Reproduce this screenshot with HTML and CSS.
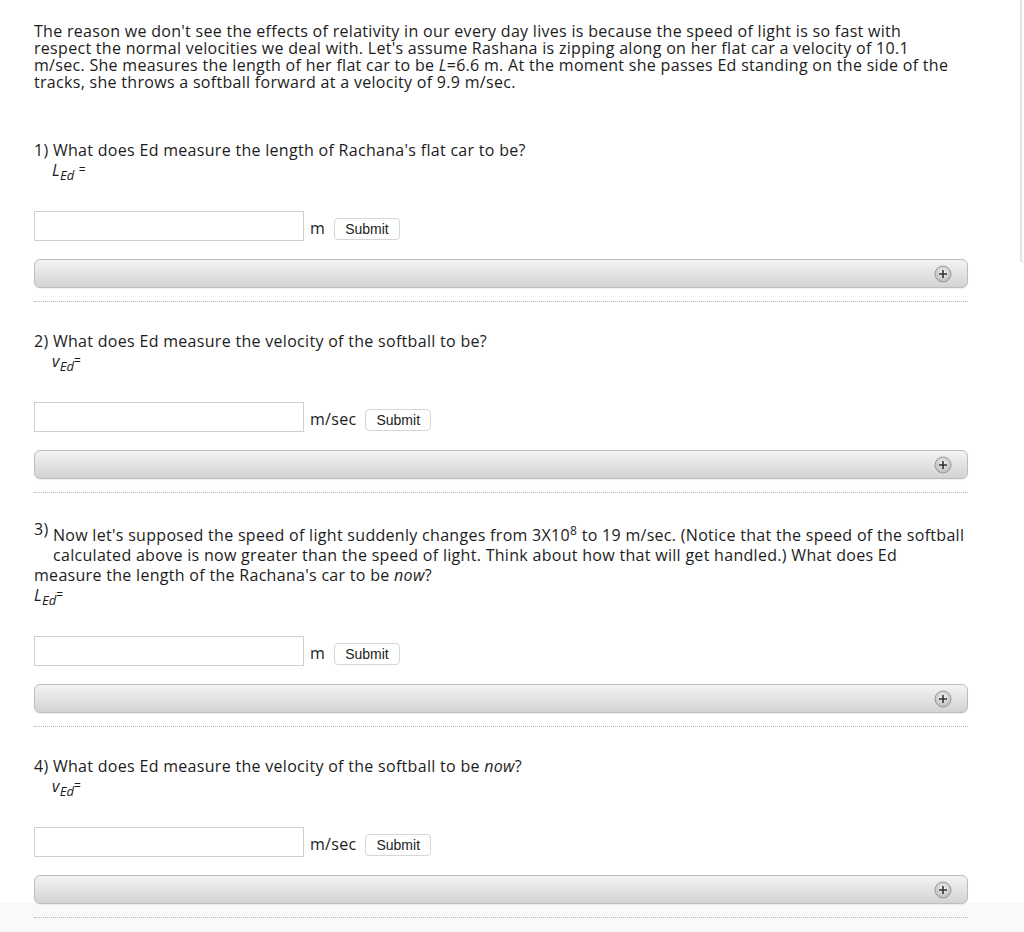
FILE: index.html
```html
<!DOCTYPE html>
<html lang="en">
<head>
<meta charset="utf-8">
<title>Relativity question</title>
<link rel="stylesheet" href="styles.css">
</head>
<body>
<div class="side-edge"></div>
<main class="page">
  <p class="intro">The reason we don't see the effects of relativity in our every day lives is because the speed of light is so fast with<br>respect the normal velocities we deal with. Let's assume Rashana is zipping along on her flat car a velocity of 10.1<br>m/sec. She measures the length of her flat car to be <i>L</i>=6.6 m. At the moment she passes Ed standing on the side of the<br>tracks, she throws a softball forward at a velocity of 9.9 m/sec.</p>

  <section class="q q-first">
    <div class="q-text">
      <div>1) What does Ed measure the length of Rachana's flat car to be?</div>
      <div class="var"><i>L<sub>Ed</sub></i> <span class="eq">=</span></div>
    </div>
    <div class="answer"><input type="text" class="field"><span class="unit">m</span><button class="submit">Submit</button></div>
    <div class="bar"><svg class="plus" viewBox="0 0 18 18" width="18" height="18"><defs><radialGradient id="g1" cx="50%" cy="40%" r="60%"><stop offset="0" stop-color="#f4f4f4"/><stop offset="1" stop-color="#b9b9b9"/></radialGradient></defs><circle cx="9" cy="9" r="8" fill="url(#g1)" stroke="#9a9a9a" stroke-width="1"/><path d="M9 5v8M5 9h8" stroke="#333" stroke-width="1.6"/></svg></div>
    <div class="dots"></div>
  </section>

  <section class="q">
    <div class="q-text">
      <div>2) What does Ed measure the velocity of the softball to be?</div>
      <div class="var"><i>v<sub>Ed</sub></i><span class="eq">=</span></div>
    </div>
    <div class="answer"><input type="text" class="field"><span class="unit">m/sec</span><button class="submit">Submit</button></div>
    <div class="bar"><svg class="plus" viewBox="0 0 18 18" width="18" height="18"><circle cx="9" cy="9" r="8" fill="url(#g1)" stroke="#9a9a9a" stroke-width="1"/><path d="M9 5v8M5 9h8" stroke="#333" stroke-width="1.6"/></svg></div>
    <div class="dots"></div>
  </section>

  <section class="q">
    <div class="q-text">
      <div><span class="num-raised">3)</span> Now let's supposed the speed of light suddenly changes from 3X10<sup>8</sup> to 19 m/sec. (Notice that the speed of the softball</div>
      <div class="indent">calculated above is now greater than the speed of light. Think about how that will get handled.) What does Ed</div>
      <div>measure the length of the Rachana's car to be <i>now</i>?</div>
      <div><i>L<sub>Ed</sub></i><span class="eq">=</span></div>
    </div>
    <div class="answer"><input type="text" class="field"><span class="unit">m</span><button class="submit">Submit</button></div>
    <div class="bar"><svg class="plus" viewBox="0 0 18 18" width="18" height="18"><circle cx="9" cy="9" r="8" fill="url(#g1)" stroke="#9a9a9a" stroke-width="1"/><path d="M9 5v8M5 9h8" stroke="#333" stroke-width="1.6"/></svg></div>
    <div class="dots"></div>
  </section>

  <section class="q">
    <div class="q-text">
      <div>4) What does Ed measure the velocity of the softball to be <i>now</i>?</div>
      <div class="var"><i>v<sub>Ed</sub></i><span class="eq">=</span></div>
    </div>
    <div class="answer"><input type="text" class="field"><span class="unit">m/sec</span><button class="submit">Submit</button></div>
    <div class="bar"><svg class="plus" viewBox="0 0 18 18" width="18" height="18"><circle cx="9" cy="9" r="8" fill="url(#g1)" stroke="#9a9a9a" stroke-width="1"/><path d="M9 5v8M5 9h8" stroke="#333" stroke-width="1.6"/></svg></div>
    <div class="dots"></div>
  </section>
</main>
</body>
</html>
```

FILE: styles.css
```css
html, body {
  margin: 0;
  padding: 0;
}

body {
  background: linear-gradient(#ffffff 903px, #f9f9f9 903px);
  min-height: 932px;
  font-family: "Open Sans", Lato, sans-serif;
  font-size: 16px;
  letter-spacing: 0.3px;
  color: #1c1c1c;
  position: relative;
}

.side-edge {
  position: absolute;
  top: 0;
  left: 1020px;
  width: 10px;
  height: 263px;
  border-left: 2px solid #e4e4e4;
  border-bottom: 1px solid #e4e4e4;
  border-bottom-left-radius: 4px;
  box-sizing: border-box;
}

.page {
  width: 934px;
  padding-left: 34px;
}

.intro {
  margin: 0;
  padding-top: 23px;
  line-height: 17px;
}

.q {
  display: flex;
  flex-direction: column;
}

.q-first {
  margin-top: 49px;
}

.q-text {
  line-height: 20px;
  margin-top: 29px;
}

.q-first .q-text {
  margin-top: 0;
}

.var {
  padding-left: 18px;
}

.indent {
  padding-left: 19px;
}

.num-raised {
  position: relative;
  top: -3px;
  vertical-align: 3px;
}

sub {
  font-size: 13px;
  vertical-align: -4px;
  line-height: 0;
  letter-spacing: 0;
}

sup {
  font-size: 12px;
  vertical-align: 6px;
  line-height: 0;
}

.eq {
  font-size: 12px;
  vertical-align: 2px;
}

.answer {
  display: flex;
  align-items: center;
  margin-top: 31px;
  height: 30px;
}

.field {
  width: 270px;
  height: 30px;
  box-sizing: border-box;
  border: 1px solid #cfcfcf;
  margin: 0;
  padding: 0 4px;
  background: #fff;
}

.unit {
  margin-left: 6px;
  margin-right: 9px;
  position: relative;
  top: 2px;
}

.submit {
  font-family: "Liberation Sans", Arial, sans-serif;
  font-size: 14px;
  letter-spacing: 0;
  color: #222;
  height: 22px;
  padding: 0 10px;
  background: #fff;
  border: 1px solid #d6d6d6;
  border-radius: 4px;
  position: relative;
  top: 3px;
}

.bar {
  margin-top: 18px;
  height: 29px;
  box-sizing: border-box;
  border: 1px solid #bdbdbd;
  border-radius: 6px;
  background: linear-gradient(#f3f3f3, #d3d3d3);
  box-shadow: 0 1px 1px rgba(0, 0, 0, 0.06);
  display: flex;
  align-items: center;
  justify-content: flex-end;
  padding-right: 15px;
}

.plus {
  display: block;
}

.dots {
  margin-top: 13px;
  border-top: 1px dotted #b5b5b5;
}
```
